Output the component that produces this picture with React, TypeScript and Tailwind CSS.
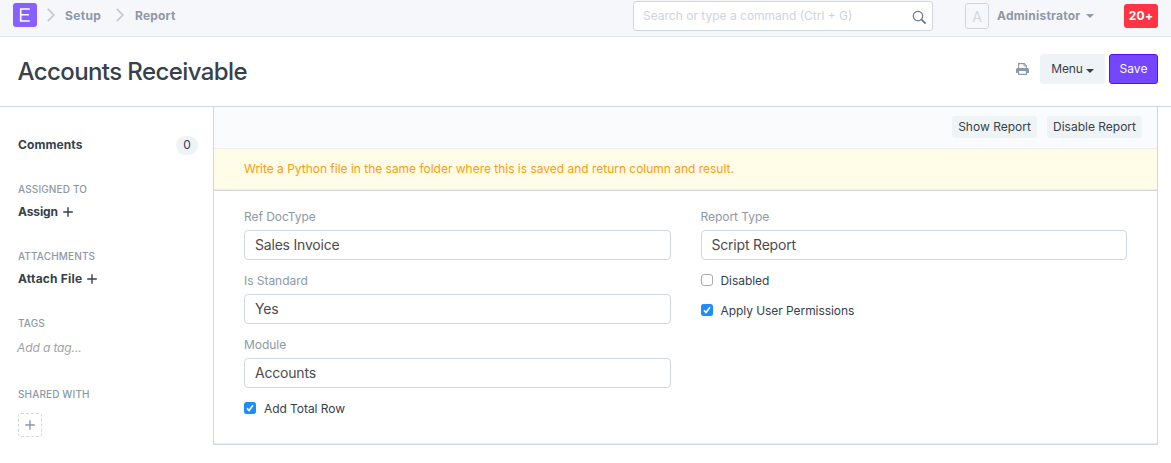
import type { ReactNode } from "react";

function Chevron({ className = "" }: { className?: string }) {
  return (
    <svg className={className} width="8" height="14" viewBox="0 0 8 14" fill="none" stroke="#c0cad4" strokeWidth="1.7">
      <path d="M0.8 0.8 L6.8 7 L0.8 13.2" />
    </svg>
  );
}

function Plus({ className = "" }: { className?: string }) {
  return (
    <svg className={className} width="10" height="10" viewBox="0 0 10 10" fill="none" stroke="currentColor" strokeWidth="1.4">
      <path d="M5 0.2V9.8M0.2 5H9.8" />
    </svg>
  );
}

function Caret({ className = "" }: { className?: string }) {
  return (
    <svg className={className} width="8" height="4" viewBox="0 0 8 4" fill="currentColor">
      <path d="M0 0H8L4 4Z" />
    </svg>
  );
}

function SideHeading({ children }: { children: ReactNode }) {
  return <div className="h-4 text-[10px] leading-4 font-medium tracking-[0.14px] whitespace-nowrap text-[#8d99a6]">{children}</div>;
}

function Field({ label, value }: { label: string; value: string }) {
  return (
    <div className="mb-1.5 flex h-[58px] flex-col">
      <label className="h-5 text-[12px] leading-[14px] tracking-[-0.04px] text-[#8d99a6]">{label}</label>
      <div className="flex h-[30px] items-center rounded-[4px] border border-[#d1d8dd] bg-white px-[10px] text-[14px] leading-5 tracking-[-0.2px] text-[#4c4c4c]">
        {value}
      </div>
    </div>
  );
}

function Check({ label, checked }: { label: string; checked?: boolean }) {
  return (
    <div className="flex h-[14px] items-start">
      {checked ? (
        <svg width="12" height="12" viewBox="0 0 12 12">
          <rect width="12" height="12" rx="2.5" fill="#1e8cff" />
          <path d="M3 6.4L5 8.6L9 3.2" fill="none" stroke="#fff" strokeWidth="1.6" />
        </svg>
      ) : (
        <span className="size-3 rounded-[3px] border border-[#ababab] bg-white" />
      )}
      <span className="ml-2 text-[12px] leading-[14px] tracking-[-0.06px]">{label}</span>
    </div>
  );
}

export default function App() {
  return (
    <div className="h-[463px] w-[1171px] overflow-hidden bg-white font-['Inter',sans-serif] text-[12px] text-[#36414c]">
      <nav className="flex h-[37px] items-start border-b border-[#e2eaf0] bg-[#f5f7fa]">
        <div className="mt-[3px] ml-[13px] flex size-6 items-center justify-center rounded-[3px] bg-[#8860ff]">
          <svg width="12" height="14" viewBox="0 0 12 14" fill="none" stroke="#fff" strokeWidth="1.6">
            <path d="M10.8 1H1.7V13H10.8M1.7 6.8H9.9" />
          </svg>
        </div>
        <Chevron className="mt-2 ml-[10px]" />
        <span className="mt-2 ml-[10px] w-[37px] leading-4 font-bold tracking-[0.35px] text-[#8d99a6]">Setup</span>
        <Chevron className="mt-2 ml-[14px]" />
        <span className="mt-2 ml-[11px] leading-4 font-bold tracking-[0.2px] text-[#8d99a6]">Report</span>
        <div className="mt-px ml-auto flex h-[30px] w-[300px] items-center justify-between rounded-[3px] border border-[#d1d8dd] bg-white pr-[5px] pl-[9px]">
          <span className="text-[12px] text-[#ced5db]">Search or type a command (Ctrl + G)</span>
          <svg className="mt-0.5" width="15" height="15" viewBox="0 0 15 15" fill="none" stroke="#6b7784">
            <circle cx="6" cy="6" r="4.7" strokeWidth="1.2" />
            <path d="M9.4 9.4L13.6 13.6" strokeWidth="1.8" />
          </svg>
        </div>
        <div className="mt-[3px] ml-8 flex h-[26px] w-6 items-center justify-center rounded-[3px] border border-[#d1d8dd] text-[14px] text-[#d1d8dd]">A</div>
        <span className="mt-2 ml-2 w-[84px] leading-4 font-bold tracking-[0.22px] text-[#8d99a6]">Administrator</span>
        <Caret className="mt-[14px] ml-[5px] text-[#8d99a6]" />
        <span className="mt-1 mr-[13px] ml-[30px] flex h-6 w-[34px] items-center justify-center rounded-[3px] bg-[#ff3546] font-bold tracking-[0.3px] text-white">20+</span>
      </nav>

      <header className="flex h-[70px] items-start border-b border-[#d1d8dd]">
        <h1 className="mt-[19px] ml-[17.5px] text-[24px] leading-8 font-[550] tracking-[-0.59px] text-[#36414c]">Accounts Receivable</h1>
        <svg className="mt-[26px] ml-auto" width="13" height="12" viewBox="0 0 13 12" fill="none">
          <path d="M2.6 5V0.6H8.3L10.4 2.7V5" stroke="#8d99a6" strokeWidth="1.1" />
          <path d="M8 0.6V3H10.4" stroke="#8d99a6" strokeWidth="0.9" />
          <path d="M1.8 5H11.2C12.3 5 13 5.7 13 6.7V10H10.8V8H2.2V10H0V6.7C0 5.7 0.7 5 1.8 5Z" fill="#8d99a6" />
          <path d="M2.6 8V11.4H10.4V8" stroke="#8d99a6" strokeWidth="1.1" />
        </svg>
        <button className="mt-[17px] ml-[11px] flex h-[30px] w-[65px] items-center rounded-[3px] bg-[#eef3f6] pl-[11px]">
          <span className="w-8 tracking-[-0.1px]">Menu</span>
          <Caret className="mt-[3px] ml-[3px]" />
        </button>
        <button className="mt-[17px] mr-[13px] ml-1 h-[30px] w-[49px] rounded-[3px] border border-[#5b0eff] bg-[#7446ff] text-white">Save</button>
      </header>

      <div className="flex">
        <aside className="h-[356px] w-[213px] pr-[15px] pl-[18px]">
          <div className="mt-[29px] flex h-[19px] items-center justify-between font-bold">
            <span className="-mt-0.5 tracking-[0.1px]">Comments</span>
            <span className="flex h-[19px] w-[22px] items-center justify-center rounded-full bg-[#eef3f6] pb-px font-normal">0</span>
          </div>
          <div className="mt-[26px]">
            <SideHeading>ASSIGNED TO</SideHeading>
            <div className="mt-[7px] flex h-4 items-center font-bold"><span className="tracking-[-0.1px]">Assign</span><Plus className="ml-[5px]" /></div>
          </div>
          <div className="mt-7">
            <SideHeading>ATTACHMENTS</SideHeading>
            <div className="mt-[7px] flex h-4 items-center font-bold"><span className="tracking-[0.2px]">Attach File</span><Plus className="ml-[5px]" /></div>
          </div>
          <div className="mt-7">
            <SideHeading>TAGS</SideHeading>
            <div className="mt-[9px] -ml-px h-4 leading-4 tracking-[-0.12px] text-[#a3a3a3] italic">Add a tag...</div>
          </div>
          <div className="mt-[30px]">
            <SideHeading>SHARED WITH</SideHeading>
            <div className="mt-[11px] flex size-6 items-center justify-center rounded-[3px] border border-dashed border-[#d1d8dd] text-[#8d99a6]"><Plus /></div>
          </div>
        </aside>

        <main className="flex h-[338px] w-[945px] flex-col border-x border-b border-[#d1d8dd] shadow-[inset_0_-1px_0_#ebeff2]">
          <div className="flex h-[42px] items-start justify-end gap-[10px] border-b border-[#ebeff2] bg-[#fafbfc] pt-[9px] pr-[15px]">
            <button className="h-[22px] w-[85px] rounded-[3px] bg-[#eef3f6] whitespace-nowrap">Show Report</button>
            <button className="h-[22px] w-[95px] rounded-[3px] bg-[#eef3f6] whitespace-nowrap">Disable Report</button>
          </div>
          <div className="flex h-[42px] items-center border-b border-[#d1d8dd] bg-[#fffce7] pb-0.5 pl-[30px] text-[#ff9d0b] shadow-[inset_0_-1px_0_#ebeff2]">
            <span className="tracking-[-0.015px]">Write a Python file in the same folder where this is saved and return column and result.</span>
          </div>
          <div className="grid grid-cols-2 gap-[30px] px-[30px] pt-[19px]">
            <div>
              <Field label="Ref DocType" value="Sales Invoice" />
              <Field label="Is Standard" value="Yes" />
              <Field label="Module" value="Accounts" />
              <Check label="Add Total Row" checked />
            </div>
            <div>
              <Field label="Report Type" value="Script Report" />
              <Check label="Disabled" />
              <div className="mt-4"><Check label="Apply User Permissions" checked /></div>
            </div>
          </div>
        </main>
      </div>
    </div>
  );
}
